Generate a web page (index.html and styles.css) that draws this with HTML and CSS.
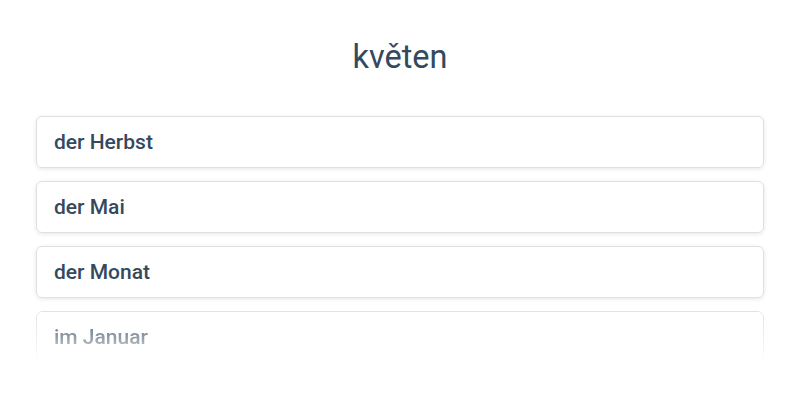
FILE: index.html
```html
<!DOCTYPE html>
<html>
<head>
<meta charset="utf-8">
<link rel="stylesheet" href="styles.css">
</head>
<body>
<div class="page">
  <h1 class="title">květen</h1>
  <ul class="options">
    <li class="option">der Herbst</li>
    <li class="option">der Mai</li>
    <li class="option">der Monat</li>
    <li class="option option-fade">im Januar</li>
  </ul>
</div>
</body>
</html>
```

FILE: styles.css
```css
html, body {
  margin: 0;
  padding: 0;
  background: #ffffff;
}
body {
  font-family: Roboto, "Noto Sans", sans-serif;
  width: 800px;
  height: 400px;
  overflow: hidden;
}
.page {
  padding: 36px 36px 0 36px;
}
.title {
  margin: 0;
  text-align: center;
  font-size: 32.5px;
  font-weight: 400;
  color: #34495e;
  line-height: 42px;
}
.options {
  list-style: none;
  margin: 38px 0 0 0;
  padding: 0;
  display: flex;
  flex-direction: column;
  gap: 13px;
}
.option {
  box-sizing: border-box;
  height: 52px;
  border: 1px solid #e0e0e0;
  border-radius: 6px;
  box-shadow: 0 1px 4px rgba(0, 0, 0, 0.1);
  padding: 0 17px;
  display: flex;
  align-items: center;
  font-size: 21px;
  font-weight: 500;
  color: #34495e;
}
.option-fade {
  -webkit-mask-image: linear-gradient(to bottom, rgba(0,0,0,0.9) 0%, rgba(0,0,0,0.55) 50%, rgba(0,0,0,0) 100%);
  mask-image: linear-gradient(to bottom, rgba(0,0,0,0.9) 0%, rgba(0,0,0,0.55) 50%, rgba(0,0,0,0) 100%);
}
```
